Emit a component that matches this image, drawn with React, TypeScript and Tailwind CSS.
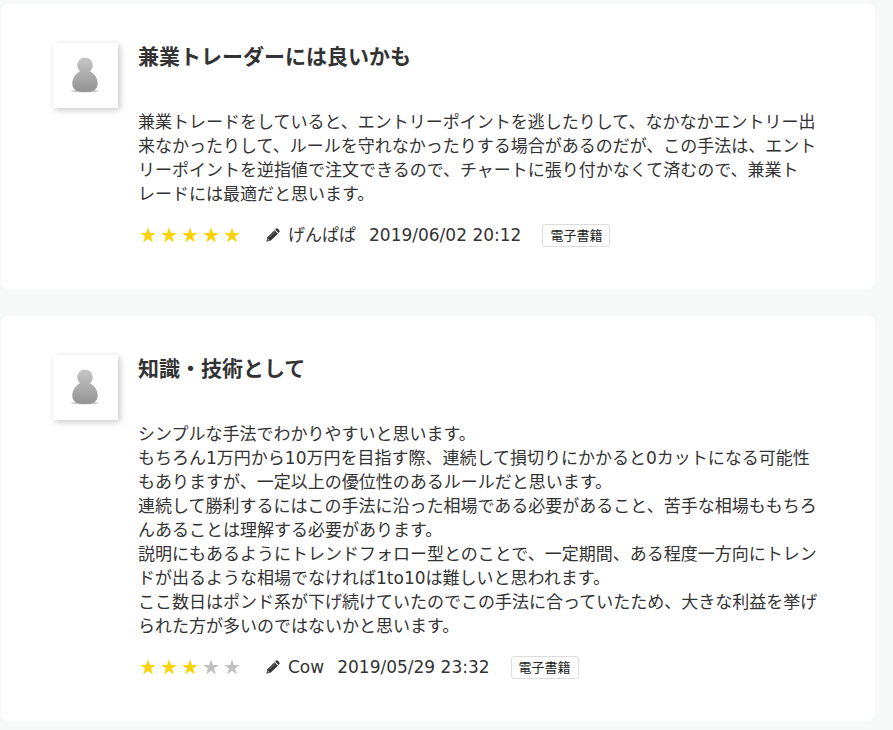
const STARS = [1, 2, 3, 4, 5];

const reviews = [
  {
    id: 1,
    title: "兼業トレーダーには良いかも",
    lines: [
      "兼業トレードをしていると、エントリーポイントを逃したりして、なかなかエントリー出来なかったりして、ルールを守れなかったりする場合があるのだが、この手法は、エントリーポイントを逆指値で注文できるので、チャートに張り付かなくて済むので、兼業トレードには最適だと思います。",
    ],
    rating: 5,
    name: "げんぱぱ",
    date: "2019/06/02 20:12",
    tag: "電子書籍",
  },
  {
    id: 2,
    title: "知識・技術として",
    lines: [
      "シンプルな手法でわかりやすいと思います。",
      "もちろん1万円から10万円を目指す際、連続して損切りにかかると0カットになる可能性もありますが、一定以上の優位性のあるルールだと思います。",
      "連続して勝利するにはこの手法に沿った相場である必要があること、苦手な相場ももちろんあることは理解する必要があります。",
      "説明にもあるようにトレンドフォロー型とのことで、一定期間、ある程度一方向にトレンドが出るような相場でなければ1to10は難しいと思われます。",
      "ここ数日はポンド系が下げ続けていたのでこの手法に合っていたため、大きな利益を挙げられた方が多いのではないかと思います。",
    ],
    rating: 3,
    name: "Cow",
    date: "2019/05/29 23:32",
    tag: "電子書籍",
  },
];

function Avatar() {
  return (
    <div className="w-[65px] h-[65px] shrink-0 bg-white shadow-[2px_2px_6px_rgba(0,0,0,0.22)]">
      <svg viewBox="0 0 65 65" className="w-full h-full" aria-hidden="true">
        <defs>
          <linearGradient id="head" x1="0" y1="0" x2="0" y2="1">
            <stop offset="0" stopColor="#c8c8c8" />
            <stop offset="1" stopColor="#adadad" />
          </linearGradient>
          <linearGradient id="body" x1="0" y1="0" x2="0" y2="1">
            <stop offset="0" stopColor="#b2b2b2" />
            <stop offset="1" stopColor="#939393" />
          </linearGradient>
          <radialGradient id="ground">
            <stop offset="0" stopColor="#888" />
            <stop offset="0.7" stopColor="#ccc" />
            <stop offset="1" stopColor="#fff" />
          </radialGradient>
        </defs>
        <ellipse cx="32" cy="48" rx="16" ry="1.8" fill="url(#ground)" />
        <path
          d="M27.5 28.5C23 30.5 19.7 35 19.7 40.5C19.7 46.5 23 48.4 32 48.4C41 48.4 44.3 46.5 44.3 40.5C44.3 35 41 30.5 36.5 28.5Z"
          fill="url(#body)"
          stroke="#999"
          strokeWidth="0.6"
        />
        <circle cx="32" cy="22.3" r="7.8" fill="url(#head)" />
      </svg>
    </div>
  );
}

function StarRating({ rating }: { rating: number }) {
  return (
    <div className="flex gap-[5px] pl-0.5" role="img" aria-label={`${rating} / 5`}>
      {STARS.map((n) => (
        <svg
          key={n}
          viewBox="0 0 16 16"
          className={n <= rating ? "w-4 h-4 fill-[#fcd307]" : "w-4 h-4 fill-[#c0c0c0]"}
        >
          <path d="M8 0.3L9.9 6H15.8L11 9.5L12.9 15.4L8 11.8L3.1 15.4L5 9.5L0.2 6H6.1Z" />
        </svg>
      ))}
    </div>
  );
}

function Pencil() {
  return (
    <svg viewBox="0 0 14 14" className="w-3.5 h-3.5 shrink-0" aria-hidden="true">
      <path d="M0.3 13.7L1.4 9.2L8.4 2.2L11.9 5.7L4.8 12.6Z" fill="#333" />
      <path d="M9.1 1.5L10.1 0.6Q11 0 11.8 0.7L13.3 2.2Q14 3 13.4 3.9L12.6 4.9Z" fill="#333" />
      <path d="M3.4 9.2L8.8 3.9" stroke="#aaa" strokeWidth="0.7" />
      <path d="M1.7 10.6L3.4 12.3L1.5 12.6Z" fill="#ddd" />
    </svg>
  );
}

type Review = (typeof reviews)[number];

function ReviewCard({ review }: { review: Review }) {
  return (
    <article className="flex items-start gap-5 bg-white rounded-lg pt-[39px] pb-[42px] px-[52px]">
      <Avatar />
      <div className="flex-1 min-w-0">
        <h2 className="text-[21px] leading-7 font-bold">{review.title}</h2>
        <div className="mt-[39px] text-[17px] leading-6 [line-break:strict]">
          {review.lines.map((line) => (
            <p key={line}>{line}</p>
          ))}
        </div>
        <div className="mt-[17px] flex items-center text-[17px] leading-6">
          <StarRating rating={review.rating} />
          <div className="ml-[26px] flex items-center gap-2">
            <Pencil />
            <span>{review.name}</span>
          </div>
          <time className="ml-[13px]">{review.date}</time>
          <span className="ml-[21px] border border-[#ddd] rounded-[3px] px-[7px] text-[13px] leading-[21px] text-[#222]">
            {review.tag}
          </span>
        </div>
      </div>
    </article>
  );
}

export default function App() {
  return (
    <main
      lang="ja"
      className="min-h-screen bg-[#f7f9f8] pt-1 pb-2 pl-px pr-[18px] flex flex-col gap-[27px] text-[#333] font-['DejaVu_Sans','Noto_Sans_CJK_JP',sans-serif]"
    >
      {reviews.map((review) => (
        <ReviewCard key={review.id} review={review} />
      ))}
    </main>
  );
}
